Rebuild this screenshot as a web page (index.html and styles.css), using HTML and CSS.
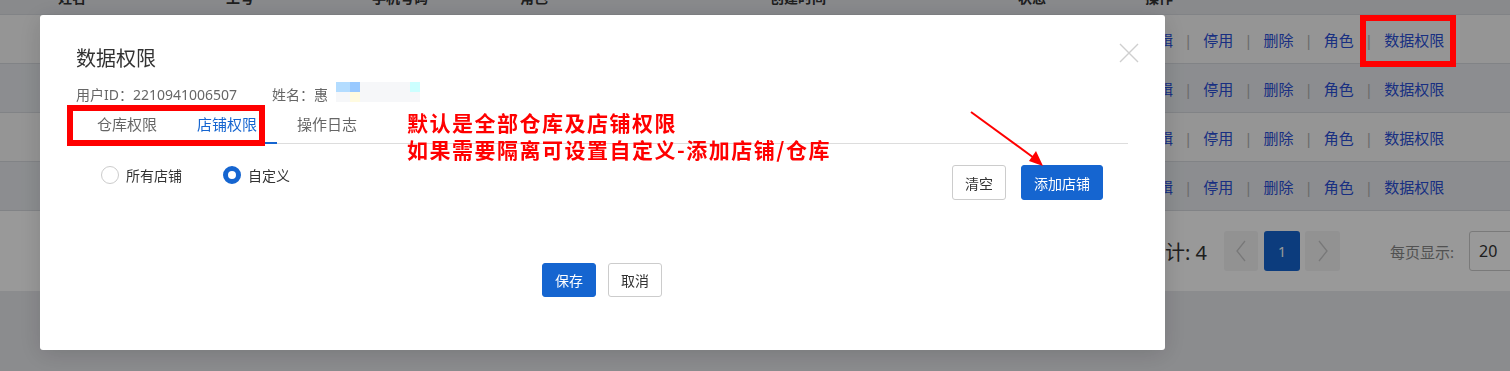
FILE: index.html
```html
<!DOCTYPE html>
<html>
<head>
    <meta charset="utf-8">
    <title>数据权限</title>
    <link rel="stylesheet" href="styles.css">
</head>
<body>
    <!-- 背景页面：用户列表 -->
    <div id="page">
        <div class="table-row table-head">
            <span>姓名</span>
            <span>工号</span>
            <span>手机号码</span>
            <span>角色</span>
            <span>创建时间</span>
            <span>状态</span>
            <span>操作</span>
        </div>
        <div class="table-row row-light">
            <span></span><span></span><span></span><span></span><span></span><span></span>
            <span class="actions"><a>编辑</a><i>|</i><a>停用</a><i>|</i><a>删除</a><i>|</i><a>角色</a><i>|</i><a>数据权限</a></span>
        </div>
        <div class="table-row row-dark">
            <span></span><span></span><span></span><span></span><span></span><span></span>
            <span class="actions"><a>编辑</a><i>|</i><a>停用</a><i>|</i><a>删除</a><i>|</i><a>角色</a><i>|</i><a>数据权限</a></span>
        </div>
        <div class="table-row row-light">
            <span></span><span></span><span></span><span></span><span></span><span></span>
            <span class="actions"><a>编辑</a><i>|</i><a>停用</a><i>|</i><a>删除</a><i>|</i><a>角色</a><i>|</i><a>数据权限</a></span>
        </div>
        <div class="table-row row-dark">
            <span></span><span></span><span></span><span></span><span></span><span></span>
            <span class="actions"><a>编辑</a><i>|</i><a>停用</a><i>|</i><a>删除</a><i>|</i><a>角色</a><i>|</i><a>数据权限</a></span>
        </div>
        <div id="pager">
            <span class="total">共计: 4</span>
            <span class="page-btn">
                <svg width="12" height="22" viewBox="0 0 12 22"><polyline points="10,1 2,11 10,21" fill="none" stroke="#c8c8c8" stroke-width="1.3"/></svg>
            </span>
            <span class="page-btn page-current">1</span>
            <span class="page-btn page-next">
                <svg width="12" height="22" viewBox="0 0 12 22"><polyline points="2,1 10,11 2,21" fill="none" stroke="#c8c8c8" stroke-width="1.3"/></svg>
            </span>
            <span class="page-size-label">每页显示:</span>
            <span class="page-size">20</span>
        </div>
    </div>

    <div id="mask"></div>

    <!-- 弹窗 -->
    <div id="dialog">
        <span class="dialog-close">
            <svg width="20" height="20" viewBox="0 0 20 20"><path d="M1 1L19 19M19 1L1 19" stroke="#cfcfcf" stroke-width="1.4"/></svg>
        </span>
        <div class="dialog-title">数据权限</div>
        <div class="user-info">
            <span>用户ID：2210941006507</span>
            <span class="user-name">姓名：惠<span class="mosaic">
                <b style="background:#b3dcff"></b><b style="background:#99c9ff"></b><b></b><b></b><b></b><b></b><b></b><b style="background:#ccffff"></b>
                <b></b><b style="background:#fffbe0"></b><b></b><b></b><b></b><b></b><b></b><b></b>
            </span></span>
        </div>
        <div class="tabs">
            <span class="tab">仓库权限</span>
            <span class="tab tab-active">店铺权限</span>
            <span class="tab">操作日志</span>
        </div>
        <div class="tool-row">
            <div class="radio-group">
                <label class="radio"><span class="radio-dot"></span>所有店铺</label>
                <label class="radio radio-checked"><span class="radio-dot"></span>自定义</label>
            </div>
            <div class="btn-group">
                <button class="btn">清空</button>
                <button class="btn btn-primary">添加店铺</button>
            </div>
        </div>
        <div class="dialog-footer">
            <button class="btn btn-primary btn-small">保存</button>
            <button class="btn btn-small">取消</button>
        </div>
    </div>

    <!-- 截图标注 -->
    <div class="mark mark-tabs"></div>
    <div class="mark mark-link"></div>
    <div class="mark-text">默认是全部仓库及店铺权限<br>如果需要隔离可设置自定义-添加店铺/仓库</div>
    <svg class="mark-arrow" width="1510" height="371" viewBox="0 0 1510 371">
        <line x1="971" y1="112" x2="1034" y2="158" stroke="#ff0000" stroke-width="2"/>
        <polygon points="1043,166 1029,161 1036,151" fill="#ff0000"/>
    </svg>
</body>
</html>
```

FILE: styles.css
```css
body {
    margin: 0;
    padding: 0;
    width: 1510px;
    height: 371px;
    overflow: hidden;
    background: #e8e9ed;
    font-family: "Noto Sans", "Noto Sans CJK SC", sans-serif;
    font-size: 14px;
    color: #333;
}

#page {
    margin-top: -21px;
}

.table-row {
    display: grid;
    grid-template-columns: 168px 146px 148px 250px 248px 127px 1fr;
    padding-left: 58px;
    height: 48px;
    align-items: center;
    border-bottom: 1px solid #d8dbe0;
    white-space: nowrap;
}

.table-head {
    height: 35px;
    background: #e4e6ea;
    font-weight: bold;
}

.row-light {
    background: #f9f9f9;
}

.row-dark {
    background: #e9ecf0;
}

.actions {
    font-size: 15px;
    margin-left: -2px;
}

.actions a {
    color: #2a4fd8;
}

.actions i {
    font-style: normal;
    color: #b0b0b0;
    margin: 0 11px;
}

#pager {
    height: 80px;
    background: #fff;
    display: flex;
    align-items: center;
    padding-left: 1145px;
    white-space: nowrap;
}

#pager > span {
    flex-shrink: 0;
}

.total {
    font-size: 20px;
    color: #333;
    margin-right: 17px;
}

.page-btn {
    width: 34px;
    height: 40px;
    background: #f3f3f4;
    border-radius: 3px;
    display: flex;
    align-items: center;
    justify-content: center;
    margin-right: 6px;
}

.page-current {
    width: 36px;
    background: #1565d0;
    color: #fff;
    margin-right: 5px;
}

.page-next {
    width: 35px;
    margin-right: 50px;
}

.page-size-label {
    font-size: 15px;
    color: #888;
    margin-right: 15px;
}

.page-size {
    width: 60px;
    height: 38px;
    border: 1px solid #ccc;
    border-radius: 3px;
    background: #fff;
    font-size: 16px;
    line-height: 38px;
    padding-left: 9px;
    color: #333;
}

#mask {
    position: fixed;
    inset: 0;
    background: rgba(0, 0, 0, 0.4);
}

#dialog {
    position: fixed;
    top: 15px;
    left: 40px;
    width: 1125px;
    height: 335px;
    box-sizing: border-box;
    padding: 30px 37px 0 36px;
    background: #fff;
    border-radius: 3px;
    box-shadow: 0 4px 24px rgba(0, 0, 0, 0.15);
}

.dialog-close {
    position: absolute;
    top: 28px;
    right: 26px;
    display: flex;
}

.dialog-title {
    font-size: 20px;
    line-height: 28px;
    color: #333;
}

.user-info {
    margin-top: 12px;
    height: 20px;
    line-height: 20px;
    color: #666;
    display: flex;
    gap: 35px;
}

.mosaic {
    display: inline-grid;
    grid-template-columns: 14px repeat(7, 10px);
    grid-template-rows: 10px 10px;
    vertical-align: top;
    margin: -3px 0 0 8px;
}

.mosaic b {
    background: #f6f7f9;
}

.tabs {
    display: flex;
    height: 38px;
    padding-left: 1px;
    border-bottom: 1px solid #ddd;
}

.tab {
    padding: 0 20px;
    font-size: 15px;
    line-height: 38px;
    color: #666;
}

.tab-active {
    color: #1565d0;
    border-bottom: 2px solid #1565d0;
    margin-bottom: -1px;
}

.tool-row {
    display: flex;
    justify-content: space-between;
    align-items: flex-start;
    margin-top: 21px;
    padding: 0 25px;
}

.radio-group {
    display: flex;
    gap: 41px;
    height: 20px;
    align-items: center;
}

.radio {
    display: flex;
    align-items: center;
    gap: 7px;
    color: #333;
}

.radio-dot {
    width: 18px;
    height: 18px;
    box-sizing: border-box;
    border: 1px solid #ccc;
    border-radius: 50%;
    background: #fff;
}

.radio-checked .radio-dot {
    border: 5px solid #1565d0;
}

.btn-group {
    display: flex;
    gap: 15px;
}

.btn {
    height: 35px;
    padding: 0 12px;
    border: 1px solid #ccc;
    border-radius: 3px;
    background: #fff;
    color: #333;
    font-family: "Noto Sans", "Noto Sans CJK SC", sans-serif;
    font-size: 14px;
}

.btn-primary {
    background: #1565d0;
    border-color: #1565d0;
    color: #fff;
}

.btn-small {
    height: 34px;
}

.dialog-footer {
    display: flex;
    justify-content: center;
    gap: 12px;
    margin-top: 63px;
}

.mark {
    position: absolute;
    box-sizing: border-box;
    border: 6px solid #ff0000;
}

.mark-tabs {
    left: 67px;
    top: 105px;
    width: 198px;
    height: 41px;
}

.mark-link {
    left: 1360px;
    top: 15px;
    width: 96px;
    height: 52px;
}

.mark-text {
    position: absolute;
    left: 407px;
    top: 109px;
    font-family: "Noto Sans CJK SC", sans-serif;
    font-size: 21px;
    font-weight: bold;
    letter-spacing: 1.5px;
    line-height: 27px;
    color: #ff0000;
}

.mark-arrow {
    position: absolute;
    left: 0;
    top: 0;
}
```
